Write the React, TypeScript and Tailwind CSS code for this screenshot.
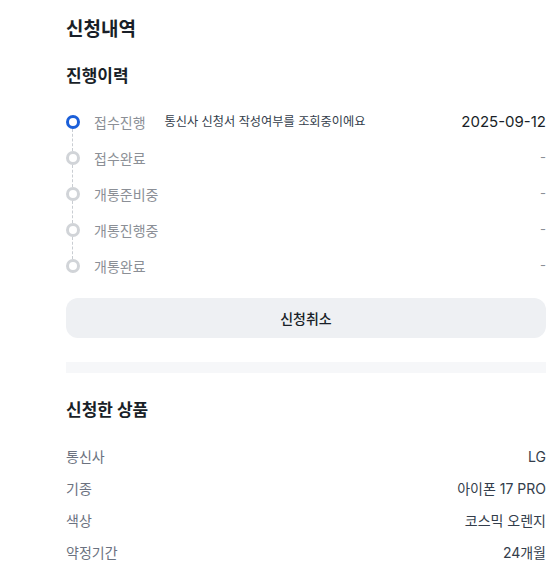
import React from "react";

const steps = [
  { label: "접수진행", desc: "통신사 신청서 작성여부를 조회중이에요", date: "2025-09-12", active: true },
  { label: "접수완료", desc: "", date: "-", active: false },
  { label: "개통준비중", desc: "", date: "-", active: false },
  { label: "개통진행중", desc: "", date: "-", active: false },
  { label: "개통완료", desc: "", date: "-", active: false },
];

const product = [
  { label: "통신사", value: "LG" },
  { label: "기종", value: "아이폰 17 PRO" },
  { label: "색상", value: "코스믹 오렌지" },
  { label: "약정기간", value: "24개월" },
];

export default function App() {
  return (
    <div
      className="min-h-screen bg-white pl-[66px] pt-[16px]"
      style={{ fontFamily: 'Inter, "Noto Sans CJK KR", "Noto Sans", sans-serif' }}
    >
      <div className="w-[480px]">
        {/* 신청내역 */}
        <h1 className="text-[19px] font-bold text-[#191f28] leading-[28px]">신청내역</h1>
        <h2 className="mt-[20px] text-[17px] font-bold text-[#191f28] leading-[24px]">진행이력</h2>

        <div className="mt-[16px] flex flex-col">
          {steps.map((s, i) => (
            <div key={s.label} className="relative flex h-[36px] items-center">
              {i < steps.length - 1 && (
                <div className="absolute left-[6px] top-[25px] h-[22px] border-l-[1.5px] border-dashed border-[#c9cdd2]" />
              )}
              <div
                className={
                  s.active
                    ? "h-[14px] w-[14px] shrink-0 rounded-full border-[3px] border-[#1b5fd9]"
                    : "h-[14px] w-[14px] shrink-0 rounded-full border-[3px] border-[#d1d4d8]"
                }
              />
              <span className="ml-[14px] text-[14px] text-[#8b8f96]">{s.label}</span>
              {s.desc && <span className="ml-[19px] text-[12.2px] text-[#333d4b]">{s.desc}</span>}
              <span
                className={
                  s.active
                    ? "ml-auto text-[15px] text-[#191f28]"
                    : "ml-auto text-[13px] text-[#8b8f96]"
                }
              >
                {s.date}
              </span>
            </div>
          ))}
        </div>

        <button className="mt-[14px] h-[40px] w-full rounded-[12px] bg-[#eef0f3] text-[14px] font-medium text-[#191f28]">
          신청취소
        </button>

        <div className="mt-[24px] h-[11px] w-full bg-[#f6f7f9]" />

        {/* 신청한 상품 */}
        <h2 className="mt-[25px] text-[17px] font-bold text-[#191f28] leading-[24px]">신청한 상품</h2>
        <div className="mt-[18px] flex flex-col">
          {product.map((p) => (
            <div key={p.label} className="flex h-[32px] items-center justify-between">
              <span className="text-[14px] text-[#6b7280]">{p.label}</span>
              <span className="text-[14px] text-[#333d4b]">{p.value}</span>
            </div>
          ))}
        </div>
      </div>
    </div>
  );
}
